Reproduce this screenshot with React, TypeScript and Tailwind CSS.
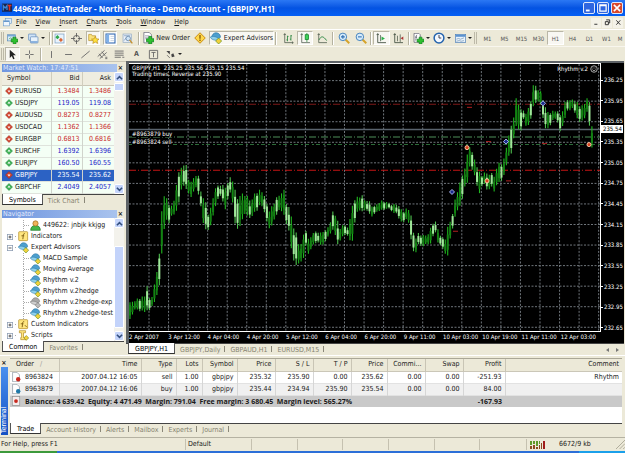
import React from 'react';
import clsx from 'clsx';

type IconProps = { children: React.ReactNode; className?: string };

const Icon: React.FC<IconProps> = ({ children, className }) => (
  <svg viewBox="0 0 16 16" aria-hidden="true" className={clsx('shrink-0', className ?? 'size-[11px]')}>
    {children}
  </svg>
);

// ---------- icons ----------

const Plus = () => <path d="M9 6h4v3h3v4h-3v3H9v-3H6V9h3z" fill="#2fc02f" stroke="#0b7a1c" strokeWidth="0.9" />;

const NewChartIcon = () => (
  <Icon>
    <rect x="0.5" y="2.5" width="12" height="9" fill="#d9ecfa" stroke="#5b8bb5" />
    <path d="M1 3h11v2H1z" fill="#6fa3d4" />
    <path d="M3 9l2-2 2 1 3-2" fill="none" stroke="#3a9a3a" />
    <Plus />
  </Icon>
);

const ProfilesIcon = () => (
  <Icon>
    <rect x="0.5" y="1.5" width="11" height="9" rx="1" fill="#cfe2f6" stroke="#5b84b8" />
    <rect x="3.5" y="5.5" width="11" height="9" rx="1" fill="#e8f2fc" stroke="#5b84b8" />
    <path d="M4 12h10v2H4z" fill="#6f9fd6" />
  </Icon>
);

const MarketIcon = () => (
  <Icon>
    <rect x="1.5" y="1.5" width="13" height="13" fill="#eaf3fb" stroke="#7aa2c8" />
    <path d="M5 3l3 3-3 3-3-3z" fill="#2fa84c" />
    <path d="M10 7l3 3-3 3-3-3z" fill="#d9683a" />
  </Icon>
);

const TargetIcon = () => (
  <Icon>
    <circle cx="8" cy="8" r="4.5" fill="none" stroke="#555" strokeWidth="1.2" />
    <path d="M8 0v6M8 10v6M0 8h6M10 8h6" stroke="#555" strokeWidth="1.2" />
  </Icon>
);

const NavigatorIcon = () => (
  <Icon>
    <path d="M1 2h4l1 2h5v7H1z" fill="#fbe27a" stroke="#b8912a" />
    <path d="M10.5 5l1.700 3.500 3.800.4-2.800 2.500.8 3.800-3.500-2-3.500 2 .8-3.800L5 8.900l3.800-.4z" fill="#ffe23c" stroke="#b8861a" strokeWidth="0.9" />
  </Icon>
);

const TerminalIcon = () => (
  <Icon>
    <rect x="1.5" y="1.5" width="13" height="13" fill="#fff" stroke="#2d65b4" strokeWidth="1.5" />
    <path d="M2 2h4v12H2z" fill="#7fb0e8" />
    <path d="M8 5h5M8 8h5M8 11h5" stroke="#b8c6d8" />
  </Icon>
);

const TesterIcon = () => (
  <Icon>
    <rect x="1.5" y="1.5" width="12" height="12" fill="#edf2f8" stroke="#8da6c2" />
    <path d="M3 4h9M3 11l3-4 2 2" fill="none" stroke="#6c8fb8" />
    <circle cx="9" cy="8" r="3.3" fill="#cfe4f7" stroke="#53789f" />
    <path d="M11 10l4 5" stroke="#c7922d" strokeWidth="2" />
  </Icon>
);

const OrderIcon = () => (
  <Icon className="size-[12px]">
    <path d="M2.5.5h7l3 3v11h-10z" fill="#fff" stroke="#667" />
    <path d="M4 5h6M4 7h6M4 9h3" stroke="#99a" />
    <Plus />
  </Icon>
);

const WarningIcon = () => (
  <Icon className="size-[12px]">
    <path d="M8 1l7 7-7 7-7-7z" fill="#ffd94a" stroke="#c98a12" strokeWidth="1.3" />
    <path d="M8 4v5M8 10v2" stroke="#7a4b00" strokeWidth="1.6" />
  </Icon>
);

const AdvisorIcon: React.FC<{ muted?: boolean; className?: string }> = ({ muted, className }) => (
  <Icon className={className ?? 'size-[12px]'}>
    <path d="M2 8c0-4 3-7 6-7s6 2 6 6l-5 3z" fill={muted ? '#a9a9a9' : '#4c9fce'} stroke={muted ? '#777' : '#2471a3'} strokeWidth="0.8" />
    <path d="M0 7c4-2 9-1 13 3-5 2-10 1-13-3z" fill={muted ? '#cfcfcf' : '#8fd0ea'} stroke={muted ? '#777' : '#2f7fae'} strokeWidth="0.8" />
    <path d="M11.5 8l4 4-4 4-4-4z" fill={muted ? '#bbb' : '#f3d23c'} stroke={muted ? '#777' : '#5f8d1c'} strokeWidth="0.9" />
  </Icon>
);

const BarsIcon = () => (
  <Icon>
    <path d="M2.5 1v13h12M1 3l1.5-2L4 3M13 12.5l2 1.5-2 1.5" fill="none" stroke="#3c4a3c" />
    <path d="M6.5 4v8M5 10h1.5M6.5 5H8M11.5 3v8M10 9h1.5M11.5 4H13" stroke="#23823a" strokeWidth="1.2" />
  </Icon>
);

const CandleIcon = () => (
  <Icon>
    <path d="M2.5 1v13h12M1 3l1.5-2L4 3" fill="none" stroke="#3c4a3c" />
    <path d="M10 0v13" stroke="#0c7a22" />
    <rect x="7.5" y="2.5" width="5" height="7" fill="#3fd35a" stroke="#0c7a22" />
  </Icon>
);

const LineIcon = () => (
  <Icon>
    <path d="M2.5 1v13h12M1 3l1.5-2L4 3" fill="none" stroke="#3c4a3c" />
    <path d="M3 10c3-6 6-6 11 1" fill="none" stroke="#23823a" strokeWidth="1.3" />
  </Icon>
);

const ZoomIcon: React.FC<{ plus?: boolean }> = ({ plus }) => (
  <Icon className="size-[12px]">
    <path d="M10 10l5 5" stroke="#d6a32a" strokeWidth="2.6" />
    <circle cx="6.5" cy="6.5" r="5" fill="#d6ecfb" stroke="#4583bd" strokeWidth="1.3" />
    <path d={plus ? 'M4 6.5h5M6.5 4v5' : 'M4 6.5h5'} stroke="#2b6cb0" strokeWidth="1.4" />
  </Icon>
);

const ScrollIcon = () => (
  <Icon>
    <path d="M2.5 1v13h12M1 3l1.5-2L4 3" fill="none" stroke="#3c4a3c" strokeWidth="1.2" />
    <path d="M6.5 3v9" stroke="#3c4a3c" />
    <path d="M8 5l5 3-5 3z" fill="#2db04a" />
  </Icon>
);

const ShiftIcon = () => (
  <Icon>
    <path d="M2.5 1v13h12M1 3l1.5-2L4 3" fill="none" stroke="#3c4a3c" strokeWidth="1.2" />
    <path d="M6.5 4v8M10.5 2v11" stroke="#3c4a3c" />
    <path d="M15 5l-4 2.500 4 2.500z" fill="#a33" />
  </Icon>
);

const IndicatorsIcon = () => (
  <Icon>
    <path d="M1.5.5h7l2 2v11h-9z" fill="#fff" stroke="#556" />
    <path d="M6 3c-2 0-1 3-2 8M3 6h3" fill="none" stroke="#445" />
    <Plus />
  </Icon>
);

const ClockIcon = () => (
  <Icon className="size-[12px]">
    <circle cx="8" cy="8" r="6.5" fill="#f2f8ff" stroke="#2463ad" strokeWidth="2" />
    <path d="M8 4v4h3" fill="none" stroke="#334" strokeWidth="1.2" />
  </Icon>
);

const TemplateIcon = () => (
  <Icon>
    <rect x="0.5" y="2" width="15" height="12" fill="#e9f3fc" stroke="#4f7fb4" />
    <path d="M1 2.500h14v3H1z" fill="#5c93d0" />
    <path d="M2 9l3-1 3 1 5-2M2 12l4-1 3 1 4-1" fill="none" stroke="#6f90b0" />
  </Icon>
);

const CursorIcon = () => (
  <Icon>
    <path d="M4 1l9 8H9l2 5-2 1-2-5-3 3z" fill="#222" />
  </Icon>
);

const StrokeIcon: React.FC<{ d: string }> = ({ d }) => (
  <Icon>
    <path d={d} fill="none" stroke="#666" strokeWidth="1.3" />
  </Icon>
);

const ArrowsIcon = () => (
  <Icon>
    <path d="M2 3h5v5zM9 8l3-2 2 5-4 1z" fill="#444" />
    <path d="M3 9l4 4" stroke="#444" />
  </Icon>
);

// ---------- toolbar parts ----------

interface ToolProps {
  label: string;
  className: string;
  pressed?: boolean;
  menu?: boolean;
  children?: React.ReactNode;
}

const Tool: React.FC<ToolProps> = ({ label, className, pressed, menu, children }) => (
  <button
    type="button"
    aria-label={label}
    className={clsx(
      'flex h-[14px] shrink-0 items-center justify-center gap-[2px] whitespace-nowrap',
      pressed && 'border border-[#b9b6a6] border-r-white border-b-white bg-[#f8f7f2]',
      className,
    )}
  >
    {children}
    {menu && (
      <svg viewBox="0 0 4 2" aria-hidden="true" className="h-[2px] w-[4px]">
        <path d="M0 0h4L2 2z" fill="#222" />
      </svg>
    )}
  </button>
);

const Separator = () => (
  <div className="flex w-[4px] shrink-0 justify-center">
    <div className="h-[13px] w-[2px] border-r border-white bg-[#b5b2a0]" />
  </div>
);

const Grip = () => (
  <div className="flex w-[5px] shrink-0 justify-end gap-px pr-px">
    <div className="h-[12px] w-px bg-[#bdb9a8]" />
    <div className="h-[12px] w-px bg-[#bdb9a8]" />
  </div>
);

const timeframes = ['M1', 'M5', 'M15', 'M30', 'H1', 'H4', 'D1', 'W1'];

const MainToolbar = () => (
  <div className="flex h-[17px] shrink-0 items-center overflow-hidden border-t border-white bg-[#ece9d8]">
    <Grip />
    <Tool label="New chart" className="w-[20px]" menu><NewChartIcon /></Tool>
    <Tool label="Profiles" className="w-[23px]" menu><ProfilesIcon /></Tool>
    <Separator />
    <Tool label="Market Watch" className="w-[14px]" pressed><MarketIcon /></Tool>
    <Tool label="Data Window" className="w-[20px]"><TargetIcon /></Tool>
    <Tool label="Navigator" className="w-[14px]" pressed><NavigatorIcon /></Tool>
    <div className="w-[3px] shrink-0" />
    <Tool label="Terminal" className="w-[14px]" pressed><TerminalIcon /></Tool>
    <Tool label="Strategy Tester" className="w-[20px]"><TesterIcon /></Tool>
    <Separator />
    <Tool label="New Order" className="w-[50px]"><OrderIcon />New Order</Tool>
    <Tool label="MetaEditor" className="w-[18px]"><WarningIcon /></Tool>
    <Tool label="Expert Advisors" className="w-[65px]" pressed><AdvisorIcon />Expert Advisors</Tool>
    <Separator />
    <div className="w-[2px] shrink-0" />
    <Tool label="Bar chart" className="w-[17px]"><BarsIcon /></Tool>
    <Tool label="Candlesticks" className="w-[16px]" pressed><CandleIcon /></Tool>
    <Tool label="Line chart" className="w-[18px]"><LineIcon /></Tool>
    <Separator />
    <Tool label="Zoom in" className="w-[17px]"><ZoomIcon plus /></Tool>
    <Tool label="Zoom out" className="w-[17px]"><ZoomIcon /></Tool>
    <Separator />
    <Tool label="Auto scroll" className="w-[17px]" pressed><ScrollIcon /></Tool>
    <Tool label="Chart shift" className="w-[17px]"><ShiftIcon /></Tool>
    <Separator />
    <Tool label="Indicators" className="w-[20px]" menu><IndicatorsIcon /></Tool>
    <Tool label="Periods" className="w-[22px]" menu><ClockIcon /></Tool>
    <Tool label="Templates" className="w-[20px]" menu><TemplateIcon /></Tool>
    <Grip />
    <div className="w-px shrink-0" />
    {timeframes.map((t) => (
      <Tool key={t} label={t} className="w-[17px] text-[6px] text-[#555]" pressed={t === 'H1'}>{t}</Tool>
    ))}
    <Tool label="MN" className="w-[10px] text-[6px] text-[#555]">M</Tool>
  </div>
);

const LineToolbar = () => (
  <div className="flex h-[15px] shrink-0 items-center overflow-hidden border-t border-[#f8f6ee] bg-[#ece9d8]">
    <Grip />
    <Tool label="Cursor" className="w-[15px]" pressed><CursorIcon /></Tool>
    <Tool label="Crosshair" className="w-[19px]"><StrokeIcon d="M8 2v5M8 9v5M2 8h5M9 8h5" /></Tool>
    <Separator />
    <Tool label="Vertical line" className="w-[17px]"><StrokeIcon d="M8 3v10" /></Tool>
    <Tool label="Horizontal line" className="w-[17px]"><StrokeIcon d="M3 8h10" /></Tool>
    <Tool label="Trendline" className="w-[17px]"><StrokeIcon d="M2 13L14 3" /></Tool>
    <Tool label="Channel" className="w-[17px]"><StrokeIcon d="M1 11L11 2M4 14L14 5M3 7l5 6M7 4l5 6M12 12h3M12 14h3" /></Tool>
    <Tool label="Fibonacci" className="w-[17px]"><StrokeIcon d="M1 3h13M1 6h13M1 9h13M1 12h9M12 12h3" /></Tool>
    <Tool label="Text" className="w-[17px] font-bold text-[#555]">A</Tool>
    <Tool label="Text label" className="w-[17px]"><StrokeIcon d="M2 2h12v12H2zM5 5h6M8 5v7" /></Tool>
    <Tool label="Arrows" className="w-[22px]" menu><ArrowsIcon /></Tool>
  </div>
);

// ---------- side panels ----------

const PanelTitle: React.FC<{ text: string }> = ({ text }) => (
  <div className="flex h-[9px] shrink-0 items-center justify-between bg-[#ece9d8]">
    <h2 className="h-[8px] flex-1 bg-linear-to-r from-[#7096df] to-[#a9c3ee] pl-px leading-[8px] text-[#e4edfc]">{text}</h2>
    <button type="button" aria-label={`Close ${text}`} className="w-[7px] text-center leading-[8px] font-bold">×</button>
  </div>
);

const ScrollButton: React.FC<{ d: string }> = ({ d }) => (
  <button type="button" aria-label="Scroll" className="flex h-[10px] shrink-0 items-center justify-center rounded-[2px] border border-white bg-[#c5d5fb]">
    <svg viewBox="0 0 8 8" aria-hidden="true" className="size-[7px]">
      <path d={d} fill="none" stroke="#35517f" strokeWidth="1.8" />
    </svg>
  </button>
);

const ScrollBar: React.FC<{ before: string; thumb: string }> = ({ before, thumb }) => (
  <div className="flex w-[10px] shrink-0 flex-col bg-[#f3f2ec]">
    <ScrollButton d="M1 6l3-3 3 3" />
    <div className={before} />
    <div className={clsx('rounded-[1px] border border-white bg-[#c3d3fa]', thumb)} />
    <div className="mt-auto flex flex-col"><ScrollButton d="M1 2l3 3 3-3" /></div>
  </div>
);

interface TabsProps { items: string[]; className?: string }

const Tabs: React.FC<TabsProps> = ({ items, className }) => (
  <div role="tablist" className={clsx('flex h-[12px] shrink-0 border-t border-[#444] bg-[#ece9d8] text-[#85826f]', className)}>
    {items.map((t, i) => (
      <button
        key={t}
        type="button"
        role="tab"
        aria-selected={i === 0}
        className={clsx(
          'h-[11px] leading-[10px] whitespace-nowrap',
          i === 0
            ? '-mt-px border-x border-b border-x-[#555] border-b-[#333] bg-white px-[6px] pt-px text-black'
            : 'relative px-[5px] after:absolute after:top-[2px] after:right-0 after:h-[6px] after:w-px after:bg-[#8a8778]',
        )}
      >
        {t}
      </button>
    ))}
  </div>
);

const quotes = [
  { symbol: 'EURUSD', bid: '1.3484', ask: '1.3486', up: false },
  { symbol: 'USDJPY', bid: '119.05', ask: '119.08', up: true },
  { symbol: 'AUDUSD', bid: '0.8273', ask: '0.8277', up: false },
  { symbol: 'USDCAD', bid: '1.1362', ask: '1.1366', up: false },
  { symbol: 'EURGBP', bid: '0.6813', ask: '0.6816', up: false },
  { symbol: 'EURCHF', bid: '1.6392', ask: '1.6396', up: true },
  { symbol: 'EURJPY', bid: '160.50', ask: '160.55', up: true },
  { symbol: 'GBPJPY', bid: '235.54', ask: '235.62', up: false, selected: true },
  { symbol: 'GBPCHF', bid: '2.4049', ask: '2.4057', up: true },
];

const MarketWatch = () => (
  <section className="flex h-[144px] shrink-0 flex-col pt-px">
    <PanelTitle text="Market Watch: 17:47:51" />
    <div className="flex min-h-0 flex-1 bg-white">
      <table className="h-full flex-1 table-fixed border-collapse">
        <colgroup>
          <col />
          <col className="w-[31px]" />
          <col className="w-[32px]" />
        </colgroup>
        <thead>
          <tr className="h-[13px] border-b border-[#cbc7b8] bg-[#efede0]">
            <th className="pl-[5px] text-left font-normal">Symbol</th>
            <th className="border-l border-[#d0cdbd] pr-[2px] text-right font-normal">Bid</th>
            <th className="border-l border-[#d0cdbd] pr-[3px] text-right font-normal">Ask</th>
          </tr>
        </thead>
        <tbody>
          {quotes.map((q) => (
            <tr
              key={q.symbol}
              className={clsx(
                'border-b border-[#dfe3dc]',
                q.selected ? 'bg-[#2c62c4] text-white' : 'bg-[#f4fff5]',
              )}
            >
              <td>
                <span className="flex items-center gap-[2px] pl-[3px]">
                  <Icon className="size-[8px]">
                    <path d="M8 1l7 7-7 7-7-7z" fill={q.up ? '#3db255' : '#d2452f'} stroke={q.up ? '#1e7c35' : '#99261a'} />
                    <path d={q.up ? 'M5 9l3-4 3 4z' : 'M5 7l3 4 3-4z'} fill="#fff" />
                  </Icon>
                  {q.symbol}
                </span>
              </td>
              <td className={clsx('border-l border-[#d0d4cc] pr-[2px] text-right', !q.selected && (q.up ? 'text-[#2222c8]' : 'text-[#c82828]'))}>{q.bid}</td>
              <td className={clsx('border-l border-[#d0d4cc] pr-[3px] text-right', !q.selected && (q.up ? 'text-[#2222c8]' : 'text-[#c82828]'))}>{q.ask}</td>
            </tr>
          ))}
        </tbody>
      </table>
      <ScrollBar before="h-px" thumb="h-[8px]" />
    </div>
    <Tabs items={['Symbols', 'Tick Chart']} />
  </section>
);

const Expander: React.FC<{ open?: boolean }> = ({ open }) => (
  <Icon className="size-[6px]">
    <rect x="1" y="1" width="14" height="14" fill="#fff" stroke="#8a9ab0" strokeWidth="2" />
    <path d={open ? 'M4 8h8' : 'M4 8h8M8 4v8'} stroke="#222" strokeWidth="2" />
  </Icon>
);

const FolderIcon: React.FC<{ letter: string }> = ({ letter }) => (
  <Icon className="size-[11px]">
    <rect x="1" y="1" width="13" height="13" rx="1" fill="#ffe680" stroke="#b38b22" />
    <path d={letter} fill="none" stroke="#7a5a10" strokeWidth="1.3" />
  </Icon>
);

const ScriptIcon = () => (
  <Icon className="size-[11px]">
    <path d="M2 1h9v3H8v7h4v3H4v-3h1V4H2z" fill="#ffe680" stroke="#b38b22" />
    <path d="M12 8l3.500 3.500L12 15l-3.500-3.500z" fill="#f3d23c" stroke="#8d8a1c" />
  </Icon>
);

const UserIcon = () => (
  <Icon className="size-[11px]">
    <path d="M1 15c0-5 3-7 7-7s7 2 7 7z" fill="#45b649" stroke="#1f7a2a" />
    <circle cx="8" cy="5" r="3.8" fill="#f0b45a" stroke="#9b6a1c" />
  </Icon>
);

const advisors = ['MACD Sample', 'Moving Average', 'Rhythm v.2', 'Rhythm v.2hedge', 'Rhythm v.2hedge-exp', 'Rhythm v.2hedge-test'];

const Leaf: React.FC<{ icon: React.ReactNode; text: string }> = ({ icon, text }) => (
  <li className="flex h-[11px] items-center pl-[21px] whitespace-nowrap">
    <span className="mr-px flex h-full w-[6px] items-center border-l border-dotted border-[#aaa]">
      <span className="w-full border-t border-dotted border-[#aaa]" />
    </span>
    {icon}
    <span className="pl-[2px]">{text}</span>
  </li>
);

const Branch: React.FC<{ icon: React.ReactNode; text: string; open?: boolean }> = ({ icon, text, open }) => (
  <div className="flex h-[11px] items-center gap-[2px] pl-[5px] whitespace-nowrap">
    <Expander open={open} />
    <span className="w-px border-t border-dotted border-[#aaa]" />
    {icon}
    {text}
  </div>
);

const Navigator = () => (
  <section className="flex min-h-0 flex-1 flex-col pt-[3px]">
    <PanelTitle text="Navigator" />
    <div className="flex min-h-0 flex-1 bg-white">
      <ul className="min-w-0 flex-1 overflow-hidden pt-[2px]">
        <Leaf icon={<UserIcon />} text="449622: jnbjk kkjgg" />
        <li><Branch icon={<FolderIcon letter="M10 4c-3-1-2 3-3 8M5 7h4" />} text="Indicators" /></li>
        <li>
          <Branch icon={<AdvisorIcon className="size-[11px]" />} text="Expert Advisors" open />
          <ul>
            {advisors.map((a) => (
              <Leaf key={a} icon={<AdvisorIcon className="size-[11px]" muted={a.endsWith('exp')} />} text={a} />
            ))}
          </ul>
        </li>
        <li><Branch icon={<FolderIcon letter="M9 4c-3-1-2 3-3 8M4 7h4M10 9l3 3" />} text="Custom Indicators" /></li>
        <li><Branch icon={<ScriptIcon />} text="Scripts" /></li>
      </ul>
      <ScrollBar before="h-[18px]" thumb="h-[82px]" />
    </div>
    <Tabs items={['Common', 'Favorites']} />
    <div className="h-[2px] shrink-0" />
  </section>
);

// ---------- chart ----------

// x, high, low of the price envelope
const envelope: [number, number, number][] = [
  [129, 303, 314], [131, 300, 322], [134, 299, 310], [138, 297, 309], [142, 296, 312], [145, 294, 313],
  [147, 280, 311], [150, 300, 309], [153, 292, 306], [156, 275, 300], [158, 262, 290], [160, 240, 282],
  [162, 205, 258], [163, 178, 250], [165, 200, 222], [166, 196, 218], [168, 203, 226], [171, 204, 218],
  [174, 200, 216], [176, 183, 214], [179, 172, 202], [183, 161, 188], [186, 163, 190], [189, 180, 194],
  [191, 182, 200], [194, 176, 192], [197, 173, 186], [199, 176, 198], [201, 190, 210], [203, 198, 225],
  [206, 200, 231], [208, 212, 230], [211, 206, 228], [213, 196, 218], [216, 187, 205], [219, 183, 196],
  [222, 184, 200], [225, 185, 212], [228, 183, 198], [230, 176, 195], [232, 174, 200], [235, 188, 225],
  [237, 195, 228], [240, 196, 231], [243, 190, 220], [246, 194, 212], [250, 198, 222], [253, 200, 216],
  [255, 190, 212], [258, 190, 210], [261, 188, 206], [264, 195, 212], [266, 200, 217], [269, 208, 232],
  [272, 205, 227], [275, 200, 218], [278, 195, 212], [281, 193, 214], [283, 180, 212], [285, 198, 220],
  [288, 205, 228], [291, 212, 250], [293, 220, 262], [295, 225, 262], [298, 240, 268], [301, 244, 263],
  [304, 230, 258], [306, 228, 245], [308, 238, 257], [311, 235, 250], [314, 232, 243], [317, 229, 243],
  [320, 232, 246], [323, 230, 245], [326, 230, 240], [330, 222, 236], [332, 210, 230], [335, 212, 232],
  [337, 218, 250], [340, 228, 242], [343, 222, 236], [346, 226, 234], [349, 226, 240], [352, 204, 247],
  [354, 196, 225], [358, 196, 212], [362, 195, 212], [365, 200, 210], [368, 198, 214], [372, 205, 217],
  [375, 206, 213], [378, 202, 213], [382, 200, 210], [386, 202, 210], [389, 202, 209], [392, 204, 212],
  [396, 203, 214], [400, 207, 222], [404, 210, 222], [408, 206, 220], [411, 215, 240], [413, 230, 250],
  [416, 235, 255], [418, 232, 245], [421, 234, 246], [424, 235, 246], [427, 234, 245], [430, 228, 246],
  [433, 222, 236], [435, 220, 232], [438, 228, 244], [441, 235, 246], [444, 238, 250], [446, 236, 260],
  [448, 225, 258], [451, 218, 232], [454, 205, 225], [456, 193, 215], [459, 186, 210], [462, 175, 200],
  [465, 164, 190], [468, 150, 185], [470, 144, 165], [473, 156, 172], [476, 160, 184], [479, 170, 196],
  [482, 175, 186], [485, 172, 186], [488, 172, 195], [491, 172, 184], [494, 175, 195], [497, 168, 186],
  [500, 158, 182], [503, 165, 180], [505, 150, 176], [508, 140, 158], [511, 125, 155], [514, 112, 142],
  [517, 92, 125], [520, 110, 137], [523, 110, 120], [526, 112, 128], [529, 107, 126], [532, 95, 115],
  [534, 81, 108], [537, 88, 104], [540, 90, 101], [543, 98, 122], [546, 110, 133], [549, 112, 128],
  [552, 111, 123], [555, 111, 120], [558, 112, 124], [561, 115, 135], [564, 103, 125], [567, 99, 112],
  [570, 101, 111], [573, 99, 110], [576, 100, 118], [579, 105, 122], [582, 106, 124], [585, 103, 120],
  [588, 93, 110], [590, 105, 132], [592, 124, 153], [595, 127, 157],
];

const STEP = 2.444;

const candles = Array.from({ length: 191 }, (_, i) => {
  const x = 130 + i * STEP;
  const k = envelope.findIndex((p) => p[0] >= x);
  const [ax, ah, al] = envelope[k - 1];
  const [bx, bh, bl] = envelope[k];
  const t = (x - ax) / (bx - ax);
  const range = al + (bl - al) * t - (ah + (bh - ah) * t);
  const high = ah + (bh - ah) * t + ((i * 7) % 5) * range * 0.04;
  const low = al + (bl - al) * t - ((i * 11) % 4) * range * 0.05;
  const falling = bh + bl > ah + al ? i % 3 !== 0 : i % 4 === 0;
  return { x, high, low, top: high + (low - high) * (0.15 + ((i * 3) % 4) * 0.06), bottom: low - (low - high) * 0.2, falling };
}).slice(0, 190);

const gridX = Array.from({ length: 24 }, (_, i) => 149 + i * 19.55);
const gridY = Array.from({ length: 13 }, (_, i) => 81.5 + i * 20.4);
const prices = Array.from({ length: 13 }, (_, i) => (236.25 - i * 0.3).toFixed(2));
const times = [
  '2 Apr 2007', '3 Apr 12:00', '4 Apr 04:00', '4 Apr 20:00', '5 Apr 12:00', '6 Apr 04:00',
  '6 Apr 20:00', '9 Apr 11:00', '10 Apr 03:00', '10 Apr 19:00', '11 Apr 11:00', '12 Apr 03:00',
];
const buys = [[452, 192], [506, 142], [543, 104]];
const sells = [[467, 148], [487, 181], [589, 145]];
const closes = [[469, 108], [488, 142], [508, 181], [544, 144], [455, 231]];

const Plot = () => (
  <svg viewBox="129 65 471 265" preserveAspectRatio="none" className="block size-full" role="img" aria-label="GBPJPY hourly candles">
    <g stroke="#7b8288" strokeWidth="0.9" strokeDasharray="2 1.5">
      {gridX.map((x) => <path key={x} d={`M${x} 65V330`} />)}
      {gridY.map((y) => <path key={y} d={`M129 ${y}H600`} />)}
    </g>
    <path d="M129 105H600" stroke="#7e1818" strokeDasharray="7 2 1 2" />
    <path d="M129 130H600" stroke="#59636e" strokeWidth="1.4" />
    <path d="M129 137.5H600" stroke="#4f8f5a" strokeDasharray="7 2 1 2" />
    <path d="M129 145H600" stroke="#2c6b38" strokeDasharray="4 3 2 2" />
    <path d="M129 170.5H600" stroke="#c41414" strokeWidth="1.1" strokeDasharray="7 2 1 2" />
    {candles.map((c) => (
      <g key={c.x}>
        <path d={`M${c.x} ${c.high}V${c.low}`} stroke={c.falling ? '#4fc04f' : '#1fb81f'} strokeWidth="1.1" />
        <rect x={c.x - 1} y={c.top} width="2" height={c.bottom - c.top} fill={c.falling ? '#a0e89a' : '#128212'} />
      </g>
    ))}
    {closes.map(([x, y]) => <path key={x} d={`M${x - 2} ${y}h5`} stroke="#b02020" />)}
    {buys.map(([x, y]) => <path key={x} d={`M${x} ${y - 2.5}l2.500 2.500-2.500 2.500-2.500-2.500z`} fill="#1a2a8a" stroke="#b8c4ff" strokeWidth="0.9" />)}
    {sells.map(([x, y]) => <circle key={x} cx={x} cy={y} r="2" fill="#d8401c" stroke="#ffd0b0" strokeWidth="0.9" />)}
  </svg>
);

const Chart = () => (
  <section className="flex min-h-0 flex-1 flex-col border-t-2 border-l-3 border-[#5d6266] bg-black text-[6px] leading-[8px] text-white">
    <div className="flex min-h-0 flex-1">
      <div className="relative min-w-0 flex-1 border-t border-r border-b border-white">
        <div className="absolute inset-0"><Plot /></div>
        <p className="absolute top-px left-[3px] leading-[6px] whitespace-pre">
          {'GBPJPY,H1  235.25 235.56 235.15 235.54\nTrading times. Reverse at 235.90'}
        </p>
        <p className="absolute top-px right-[2px] flex items-center gap-[2px]">
          Rhythm v.2
          <Icon className="size-[8px]">
            <circle cx="8" cy="8" r="6.5" fill="none" stroke="#ddd" strokeWidth="1.5" />
            <path d="M5 9c1 3 5 3 6 0M6 5v2M10 5v2" fill="none" stroke="#ddd" strokeWidth="1.4" />
          </Icon>
        </p>
        <p className="absolute top-[25%] left-[3px] bg-black leading-[6px]">#8963879 buy</p>
        <p className="absolute top-[28%] left-[3px] bg-black leading-[6px]">#8963824 sell</p>
      </div>
      <div className="relative flex w-[23px] shrink-0 flex-col justify-between pt-[13px]">
        {prices.map((p) => (
          <span key={p} className="flex items-center gap-px"><i className="h-px w-[2px] shrink-0 bg-white" />{p}</span>
        ))}
        <strong className="absolute top-[23%] left-0 w-[22px] bg-white pl-[2px] font-normal text-black">235.54</strong>
      </div>
    </div>
    <div className="mr-[24px] grid h-[11px] shrink-0 grid-cols-12 leading-[10px] whitespace-nowrap">
      {times.map((t) => (
        <span key={t} className="w-0">{t}</span>
      ))}
    </div>
  </section>
);

// ---------- terminal ----------

const columns = [
  { name: 'Time', width: 'w-[82px]' },
  { name: 'Type', width: 'w-[35px]' },
  { name: 'Lots', width: 'w-[26px]' },
  { name: 'Symbol', width: 'w-[35px]' },
  { name: 'Price', width: 'w-[38px]' },
  { name: 'S / L', width: 'w-[38px]' },
  { name: 'T / P', width: 'w-[38px]' },
  { name: 'Price', width: 'w-[36px]' },
  { name: 'Commi...', width: 'w-[38px]' },
  { name: 'Swap', width: 'w-[38px]' },
  { name: 'Profit', width: 'w-[42px]' },
  { name: 'Comment', width: '' },
];

const orders = [
  { id: '8963824', dot: '#c8281e', cells: ['2007.04.12 16:05', 'sell', '1.00', 'gbpjpy', '235.32', '235.90', '0.00', '235.62', '0.00', '0.00', '-251.93', 'Rhythm'] },
  { id: '8963879', dot: '#1f78a8', cells: ['2007.04.12 16:06', 'buy', '1.00', 'gbpjpy', '235.44', '234.94', '235.90', '235.54', '0.00', '0.00', '84.00', ''] },
];

const Terminal = () => (
  <section className="flex shrink-0 border-t border-white bg-[#ece9d8] pt-[2px] pr-[3px] pb-[2px]">
    <div className="flex w-[10px] shrink-0 flex-col items-center pr-[2px]">
      <button type="button" aria-label="Close terminal" className="h-[9px] leading-[8px] font-bold">×</button>
      <h2 className="w-[7px] flex-1 rotate-180 bg-linear-to-b from-[#1450c4] to-[#4a90ee] pt-[2px] leading-[7px] text-white [writing-mode:vertical-rl]">Terminal</h2>
    </div>
    <div className="min-w-0 flex-1 border-t border-[#aaa797] bg-white">
      <table className="w-full table-fixed border-collapse">
        <colgroup>
          <col className="w-[49px]" />
          {columns.map((c, i) => <col key={i} className={c.width} />)}
        </colgroup>
        <thead>
          <tr className="h-[12px] border-b border-[#cbc7b8] bg-[#ece9d8]">
            <th className="pl-[6px] text-left font-normal">Order <span className="pl-[4px] text-[#999]">/</span></th>
            {columns.map((c, i) => (
              <th key={i} className="border-l border-[#c9c5b5] pr-[3px] text-right font-normal">{c.name}</th>
            ))}
          </tr>
        </thead>
        <tbody>
          {orders.map((o, row) => (
            <tr key={o.id} className={clsx('h-[12px] border-b border-[#e2e2e2]', row === 0 ? 'bg-white' : 'bg-[#f0f0f0]')}>
              <td>
                <span className="flex items-center gap-[4px] pl-px">
                  <Icon className="size-[10px]">
                    <path d="M2.5.5h7l4 4v11h-11z" fill="#fff" stroke="#7c8894" />
                    <circle cx="11.5" cy="11.5" r="3.5" fill={o.dot} />
                  </Icon>
                  {o.id}
                </span>
              </td>
              {o.cells.map((c, i) => <td key={i} className="border-l border-[#d6d6d6] pr-[3px] text-right">{c}</td>)}
            </tr>
          ))}
          <tr className="h-[12px] bg-[#c9c9c9] font-['Open_Sans',sans-serif] font-bold">
            <td colSpan={11}>
              <span className="flex items-center gap-[4px] pl-px whitespace-pre">
                <Icon className="size-[10px]">
                  <rect x="2" y="1" width="12" height="14" fill="#f4ecec" stroke="#888" />
                  <circle cx="8" cy="8" r="3" fill="#c8281e" />
                </Icon>
                Balance: 4 639.42  Equity: 4 471.49  Margin: 791.04  Free margin: 3 680.45  Margin level: 565.27%
              </span>
            </td>
            <td className="pr-[3px] text-right">-167.93</td>
            <td />
          </tr>
        </tbody>
      </table>
      <div className="h-[16px]" />
      <Tabs items={['Trade', 'Account History', 'Alerts', 'Mailbox', 'Experts', 'Journal']} />
    </div>
  </section>
);

const StatusBar = () => (
  <footer className="flex h-[14px] shrink-0 items-center border-t border-[#b5b2a2] bg-[#ece9d8]">
    <span className="w-[185px] shrink-0 pl-px">For Help, press F1</span>
    <span className="h-[11px] w-[66px] shrink-0 border-l border-[#c5c1b0] pl-[2px] leading-[11px]">Default</span>
    <div className="grid h-[11px] flex-1 grid-cols-6 divide-x divide-[#c5c1b0] border-x border-[#c5c1b0]">
      {[0, 1, 2, 3, 4, 5].map((n) => <span key={n} />)}
    </div>
    <div className="flex w-[98px] shrink-0 items-center pl-[3px]">
      <svg viewBox="0 0 15 8" aria-hidden="true" className="h-[8px] w-[15px]">
        <path d="M0 0h2v4H0zM3 0h2v3H3zM6 0h2v5H6zM9 0h1v3H9z" fill="#5f9a2a" />
        <path d="M0 5h2v3H0zM3 4h2v4H3zM6 6h2v2H6zM9 4h1v4H9zM11 2h1v6h-1z" fill="#8c4a20" />
        <path d="M13 0h2v8h-2z" fill="#a01c1c" />
      </svg>
      <span className="pl-[14px]">6672/9 kb</span>
      <svg viewBox="0 0 10 10" aria-hidden="true" className="ml-auto size-[9px] self-end">
        <path d="M0 10L10 0M4 10l6-6M8 10l2-2" stroke="#aaa796" />
      </svg>
    </div>
  </footer>
);

// ---------- window ----------

const windowButton = 'flex size-[12px] items-center justify-center rounded-[2px] border border-[#dfe8fb]';

const TitleBar = () => (
  <header className="flex h-[16px] shrink-0 items-center bg-linear-to-b from-[#2b78f4] via-[#0453e2] to-[#0560f5] pr-[2px] pl-[2px] text-white">
    <Icon className="size-[10px]">
      <rect y="1" width="16" height="13" fill="#16244f" />
      <path d="M2 12V4l3 4 3-4v7" fill="none" stroke="#3f8be0" strokeWidth="2" />
      <path d="M9 4h6M12 4v8" stroke="#e03020" strokeWidth="2.5" />
    </Icon>
    <h1 className="min-w-0 flex-1 truncate pl-px font-['Open_Sans',sans-serif] text-[8px] font-bold">
      449622: MetaTrader - North Finance - Demo Account - [GBPJPY,H1]
    </h1>
    <div className="flex gap-[2px]">
      <button type="button" aria-label="Minimize" className={clsx(windowButton, 'bg-[#2f66e0]')}>
        <Icon className="size-[10px]"><path d="M3 12h6" stroke="#fff" strokeWidth="3" /></Icon>
      </button>
      <button type="button" aria-label="Maximize" className={clsx(windowButton, 'bg-[#2f66e0]')}>
        <Icon className="size-[10px]"><path d="M3 3h10v10H3zM3 4h10" fill="none" stroke="#fff" strokeWidth="2" /></Icon>
      </button>
      <button type="button" aria-label="Close" className={clsx(windowButton, 'bg-[#d9482b]')}>
        <Icon className="size-[10px]"><path d="M3 3l10 10M13 3L3 13" stroke="#fff" strokeWidth="2.5" /></Icon>
      </button>
    </div>
  </header>
);

const MenuBar = () => (
  <nav className="flex h-[13px] shrink-0 items-center gap-[9px] bg-[#ece9d8] pr-[2px] pl-[3px]">
    <Icon className="-mr-[5px] size-[9px]">
      <rect x="4" y="0.5" width="11" height="9" fill="#dcebfa" stroke="#5f93c8" />
      <rect x="0.5" y="5" width="11" height="9" fill="#eef6fd" stroke="#5f93c8" />
      <path d="M1 6h10" stroke="#5f93c8" strokeWidth="2" />
    </Icon>
    {['File', 'View', 'Insert', 'Charts', 'Tools', 'Window', 'Help'].map((m) => (
      <button key={m} type="button" className="first-letter:underline">{m}</button>
    ))}
    <div className="ml-auto flex gap-px">
      {['M3 12h7', 'M5 2h8v7h-3M3 6h7v7H3z', 'M3 3l9 10M12 3L3 13'].map((d) => (
        <button key={d} type="button" aria-label="Chart window control" className="flex h-[10px] w-[10px] items-center justify-center bg-[#f4f2e8]">
          <Icon className="size-[7px]"><path d={d} fill="none" stroke="#333" strokeWidth="2.2" /></Icon>
        </button>
      ))}
    </div>
  </nav>
);

const ChartTabs = () => (
  <div className="flex h-[12px] shrink-0 bg-[#ece9d8]">
    <Tabs className="flex-1 pl-[2px]" items={['GBPJPY,H1', 'GBPJPY,Daily', 'GBPAUD,H1', 'EURUSD,M15']} />
    <div className="flex items-center gap-[7px] border-t border-[#444] pr-[5px]">
      <svg viewBox="0 0 3 4" aria-hidden="true" className="h-[4px] w-[3px]"><path d="M3 0v4L0 2z" fill="#777" /></svg>
      <svg viewBox="0 0 3 4" aria-hidden="true" className="h-[4px] w-[3px]"><path d="M0 0v4l3-2z" fill="#777" /></svg>
    </div>
  </div>
);

const App: React.FC = () => {
  return (
    <div className="flex h-screen min-h-[400px] flex-col overflow-hidden bg-[#ece9d8] font-['DejaVu_Sans_Condensed','DejaVu_Sans',sans-serif] text-[7px] leading-[9px] text-[#1a1a1a]">
      <TitleBar />
      <MenuBar />
      <MainToolbar />
      <LineToolbar />
      <main className="flex min-h-0 flex-1">
        <aside className="flex w-[126px] shrink-0 flex-col border-t border-[#c9c5b5] pr-[2px] pl-[2px]">
          <MarketWatch />
          <Navigator />
        </aside>
        <div className="flex min-w-0 flex-1 flex-col pr-px">
          <Chart />
          <ChartTabs />
        </div>
      </main>
      <Terminal />
      <StatusBar />
      <div className="flex h-[2px] shrink-0 bg-[#2c6fd8]">
        <div className="w-[57px] bg-[#3c9a3c]" />
        <div className="ml-auto w-[46px] bg-[#1ba0ea]" />
      </div>
    </div>
  );
};

export default App;
